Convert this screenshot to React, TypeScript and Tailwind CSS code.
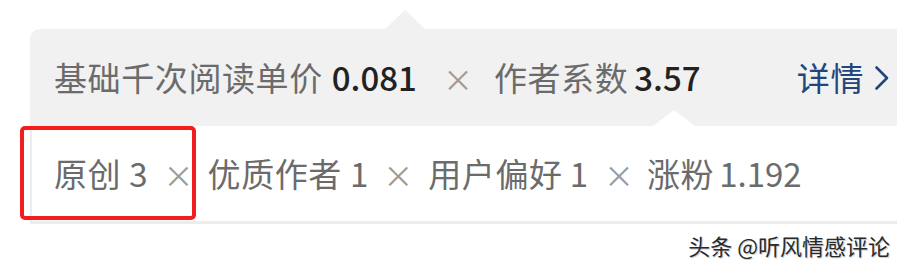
import React from 'react';

const font = { fontFamily: '"Noto Sans CJK SC", "Noto Sans", sans-serif' };

const Times = ({ className = '' }: { className?: string }) => (
    <span className={'text-[30px] leading-none text-[#9b9b9b] ' + className}>×</span>
);

const App = () => {
    return (
        <div className="relative w-[897px] h-[269px] bg-white overflow-hidden" style={font}>
            <div className="pt-[29px] pl-[30px]">
                {/* top row */}
                <div className="relative h-[97px] bg-[#f1f1f1] rounded-tl-[10px] flex items-center pl-[24px] pr-[7px] text-[33px]">
                    <div className="absolute -top-[19px] left-[355px] w-0 h-0 border-l-[20px] border-r-[20px] border-b-[19px] border-l-transparent border-r-transparent border-b-[#f1f1f1]" />
                    <span className="text-[#6b6b6b] tracking-[0.6px]">基础千次阅读单价</span>
                    <span className="ml-[9px] text-[#222] font-medium">0.081</span>
                    <Times className="ml-[26px]" />
                    <span className="ml-[21px] text-[#6b6b6b] tracking-[0.6px]">作者系数</span>
                    <span className="ml-[6px] text-[#222] font-medium">3.57</span>
                    <div className="flex-1" />
                    <span className="text-[#22467c] tracking-[0.6px]">详情</span>
                    <svg className="ml-[10px]" width="16" height="26" viewBox="0 0 16 26" fill="none">
                        <path d="M2.5 2.5 L13 13 L2.5 23.5" stroke="#22467c" strokeWidth="2.6" strokeLinecap="round" strokeLinejoin="round" />
                    </svg>
                </div>
                {/* bottom row */}
                <div className="relative h-[98px] bg-white border-l-2 border-b-[3px] border-[#ececec] flex items-center pl-[22px] text-[33px] text-[#6b6b6b]">
                    <div className="absolute -top-[16px] left-[621px] w-0 h-0 border-l-[21px] border-r-[21px] border-b-[16px] border-l-transparent border-r-transparent border-b-white" />
                    <span className="tracking-[0.6px]">原创</span>
                    <span className="ml-[8px]">3</span>
                    <Times className="ml-[16px]" />
                    <span className="ml-[14px] tracking-[0.6px]">优质作者</span>
                    <span className="ml-[8px]">1</span>
                    <Times className="ml-[15px]" />
                    <span className="ml-[15px] tracking-[0.6px]">用户偏好</span>
                    <span className="ml-[7px]">1</span>
                    <Times className="ml-[16px]" />
                    <span className="ml-[13px] tracking-[0.6px]">涨粉</span>
                    <span className="ml-[5px]">1.192</span>
                </div>
            </div>
            {/* annotation box */}
            <div className="absolute left-[20px] top-[126px] w-[176px] h-[94px] border-4 border-[#f01e1e] rounded-[5px]" />
            {/* watermark */}
            <div className="absolute right-[7px] top-[234px] text-[22px] leading-none text-[#2a2a2a] [text-shadow:1px_1px_0_#d0d0d0]">
                头条 @听风情感评论
            </div>
        </div>
    );
};

export default App;
